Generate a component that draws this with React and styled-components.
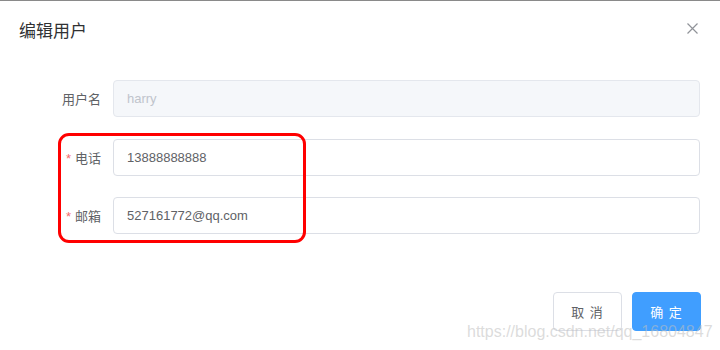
import React from 'react';
import styled, {createGlobalStyle} from 'styled-components';

const GlobalStyle = createGlobalStyle`
  html, body {
    margin: 0;
    padding: 0;
    background: #fff;
  }
  body {
    font-family: "Liberation Sans", "Noto Sans CJK SC", sans-serif;
  }
`;

const Dialog = styled.div`
  position: relative;
  width: 720px;
  height: 350px;
  box-sizing: border-box;
  border-top: 1px solid #8a8a8a;
  background: #fff;
  overflow: hidden;
`;

const Header = styled.div`
  display: flex;
  justify-content: space-between;
  align-items: center;
  padding: 19px 20px 0 19px;
  height: 24px;
`;

const Title = styled.span`
  font-size: 17px;
  line-height: 24px;
  color: #303133;
`;

const CloseButton = styled.button`
  display: flex;
  align-items: center;
  justify-content: center;
  border: none;
  background: none;
  padding: 0;
  margin-top: -8px;
  margin-right: 2px;
  width: 12px;
  height: 12px;
  cursor: pointer;
`;

const Form = styled.form`
  position: relative;
  display: flex;
  flex-direction: column;
  gap: 21.5px;
  margin: 36px 20px 0 0;
`;

const Row = styled.div`
  display: flex;
  align-items: center;
`;

const Label = styled.label`
  width: 101px;
  padding-right: 12px;
  text-align: right;
  font-size: 13px;
  color: #606266;
  flex-shrink: 0;
`;

const Star = styled.span`
  color: #f56c6c;
  margin-right: 4px;
`;

const Input = styled.input`
  flex: 1;
  height: 37px;
  box-sizing: border-box;
  border: 1px solid #dcdfe6;
  border-radius: 4px;
  padding: 0 13px;
  font-family: "Liberation Sans", "Noto Sans CJK SC", sans-serif;
  font-size: 13px;
  color: #606266;
  background: ${p => (p.disabled ? '#f5f7fa' : '#fff')};
  border-color: ${p => (p.disabled ? '#e4e7ed' : '#dcdfe6')};
  outline: none;

  &:disabled {
    color: #c0c4cc;
  }
`;

const Highlight = styled.div`
  position: absolute;
  left: 58px;
  top: 53px;
  width: 248px;
  height: 110px;
  box-sizing: border-box;
  border: 3px solid #ff0000;
  border-radius: 11px;
  pointer-events: none;
`;

const Footer = styled.div`
  display: flex;
  justify-content: flex-end;
  gap: 10px;
  padding: 58px 19px 0 0;
`;

const Button = styled.button`
  width: 69px;
  height: 39px;
  box-sizing: border-box;
  border-radius: 4px;
  font-family: "Liberation Sans", "Noto Sans CJK SC", sans-serif;
  font-size: 13px;
  letter-spacing: 1px;
  border: 1px solid ${p => (p.primary ? '#409eff' : '#dcdfe6')};
  background: ${p => (p.primary ? '#409eff' : '#fff')};
  color: ${p => (p.primary ? '#fff' : '#606266')};
  cursor: pointer;
`;

const Watermark = styled.div`
  position: absolute;
  left: 467px;
  top: 322px;
  font-family: "Liberation Sans", sans-serif;
  font-size: 16px;
  line-height: 18px;
  color: rgba(190, 190, 190, 0.55);
  white-space: nowrap;
  pointer-events: none;
`;

function CloseIcon() {
  return (
    <svg width="11" height="11" viewBox="0 0 11 11">
      <path d="M0.5 0.5 L10.5 10.5 M10.5 0.5 L0.5 10.5" stroke="#909399" strokeWidth="1.2" fill="none" />
    </svg>
  );
}

export default function App() {
  return (
    <>
      <GlobalStyle />
      <Dialog>
        <Header>
          <Title>编辑用户</Title>
          <CloseButton type="button">
            <CloseIcon />
          </CloseButton>
        </Header>
        <Form>
          <Row>
            <Label>用户名</Label>
            <Input disabled value="harry" readOnly />
          </Row>
          <Row>
            <Label><Star>*</Star>电话</Label>
            <Input value="13888888888" readOnly />
          </Row>
          <Row>
            <Label><Star>*</Star>邮箱</Label>
            <Input value="527161772@qq.com" readOnly />
          </Row>
          <Highlight />
        </Form>
        <Footer>
          <Button type="button">取 消</Button>
          <Button type="button" primary>确 定</Button>
        </Footer>
        <Watermark>https://blog.csdn.net/qq_16804847</Watermark>
      </Dialog>
    </>
  );
}
